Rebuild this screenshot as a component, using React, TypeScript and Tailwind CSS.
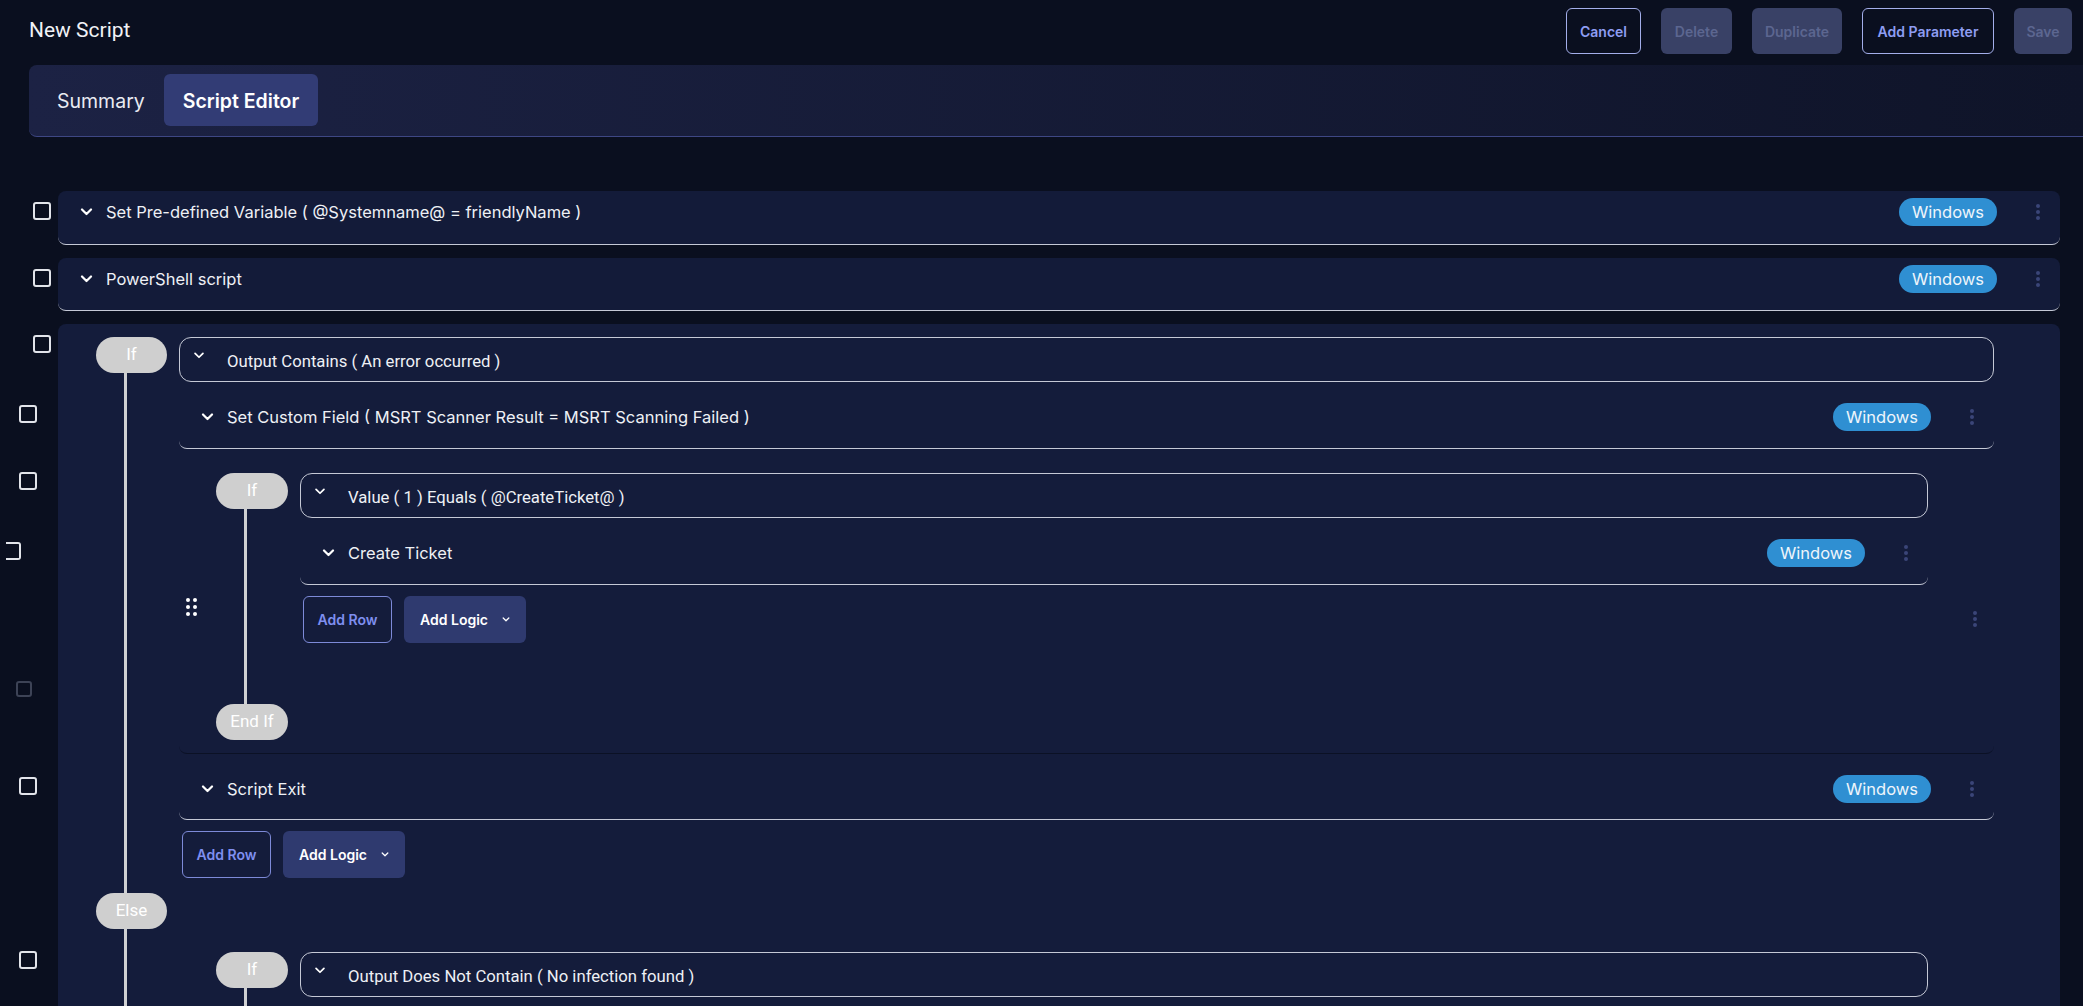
import React from "react";

const Chevron = ({ className = "", sw = "2" }: { className?: string; sw?: string }) => (
  <svg viewBox="0 0 12 8" className={className} fill="none" stroke="currentColor" strokeWidth={sw} strokeLinecap="round" strokeLinejoin="round">
    <path d="M1.5 1.5 6 6l4.5-4.5" />
  </svg>
);

const Kebab = ({ className = "" }: { className?: string }) => (
  <div className={`flex flex-col gap-[2px] ${className}`}>
    <span className="h-[4px] w-[4px] rounded-full bg-[#3a4578]" />
    <span className="h-[4px] w-[4px] rounded-full bg-[#3a4578]" />
    <span className="h-[4px] w-[4px] rounded-full bg-[#3a4578]" />
  </div>
);

const DragHandle = ({ className = "" }: { className?: string }) => (
  <div className={`grid grid-cols-2 gap-x-[3px] gap-y-[3px] ${className}`}>
    {[0, 1, 2, 3, 4, 5].map((i) => (
      <span key={i} className="h-[4px] w-[4px] rounded-full bg-white" />
    ))}
  </div>
);

const Checkbox = ({ className = "" }: { className?: string }) => (
  <div className={`absolute h-[18px] w-[18px] rounded-[3px] border-2 border-[#e2e4ea] ${className}`} />
);

const Badge = () => (
  <span className="flex h-[28px] items-center rounded-full bg-[#2f8fd2] px-[13px] font-['Inter',sans-serif] text-[16.5px] text-[#eef5fb]">
    Windows
  </span>
);

const Pill = ({ label, wide = false }: { label: string; wide?: boolean }) => (
  <div
    className={`flex h-[36px] shrink-0 items-center justify-center rounded-full bg-[#cfcfcf] text-[17px] text-white ${
      wide ? "w-[72px]" : "w-[71px]"
    }`}
  >
    {label}
  </div>
);

function StepRow({
  label,
  box = false,
  cbClass,
  pt = "",
  pb = "pb-[10px]",
}: {
  label: string;
  box?: boolean;
  cbClass?: string;
  pt?: string;
  pb?: string;
}) {
  return (
    <div className={`relative rounded-lg border-b border-[#c5c9d6] ${box ? "bg-[#131b39]" : ""} ${pt} ${pb}`}>
      {cbClass && <Checkbox className={cbClass} />}
      <div className="flex h-[42px] items-center pl-[22px] pr-[20px]">
        <Chevron className="h-[8px] w-[13px] shrink-0 text-white" sw="2.2" />
        <span className="ml-[13px] font-['Inter',sans-serif] text-[16.5px] text-[#eef0f5]">{label}</span>
        <span className="ml-auto">
          <Badge />
        </span>
        <Kebab className="ml-[39px]" />
      </div>
    </div>
  );
}

const Condition = ({ label }: { label: string }) => (
  <div className="flex h-[45px] rounded-xl border border-[#c5c9d6] pl-[13px]">
    <Chevron className="mt-[14px] h-[7px] w-[12px] shrink-0 text-white" />
    <span className="ml-[22px] mt-[12px] text-[16.7px] leading-[24px] text-[#eef0f5]">{label}</span>
  </div>
);

const ActionButtons = () => (
  <div className="ml-[3px] flex gap-[12px] font-['Inter',sans-serif] text-[14px] font-semibold">
    <button className="h-[47px] w-[89px] rounded-md border border-[#7d8ad8] text-[#7f8ff0]">Add Row</button>
    <button className="flex h-[47px] w-[122px] items-center justify-center gap-[14px] rounded-md bg-[#2f3a6f] text-white">
      Add Logic
      <Chevron className="h-[5px] w-[8px] text-white" />
    </button>
  </div>
);

function NestedIf({
  label,
  children,
  cbTop,
  extras,
  tall = true,
}: {
  label: string;
  children?: React.ReactNode;
  cbTop: string;
  extras?: React.ReactNode;
  tall?: boolean;
}) {
  return (
    <div className="relative rounded-b-lg border-b border-[#0b1125] pb-[13px] pl-[37px] pt-[24px]">
      <Checkbox className={`left-[-160px] ${cbTop}`} />
      {extras}
      <div className="flex gap-[12px]">
        <div className="flex w-[72px] shrink-0 flex-col">
          <Pill label="If" wide />
          <div className={`ml-[28px] w-[3px] bg-[#cfd0d2] ${tall ? "h-[195px]" : "h-[200px]"}`} />
          {tall && <Pill label="End If" wide />}
        </div>
        <div className="mr-[66px] flex-1">
          <Condition label={label} />
          {children}
        </div>
      </div>
    </div>
  );
}

export default function App() {
  return (
    <div className="h-screen w-full overflow-hidden bg-[#0a0f1f] font-['Roboto',sans-serif] text-white">
      <header className="flex items-center justify-between pl-[29px] pr-[11px] pt-[8px]">
        <h1 className="text-[21px] text-[#f1f2f6]">New Script</h1>
        <div className="flex items-center gap-[20px] font-['Inter',sans-serif] text-[14px] font-semibold">
          <button className="h-[46px] w-[75px] rounded-md border border-[#a3aeea] text-[#8e9df2]">Cancel</button>
          <button className="h-[46px] w-[71px] rounded-md bg-[#394166] text-[#5c6690]">Delete</button>
          <button className="h-[46px] w-[90px] rounded-md bg-[#394166] text-[#5c6690]">Duplicate</button>
          <button className="h-[46px] w-[132px] rounded-md border border-[#a3aeea] text-[#8e9df2]">Add Parameter</button>
          <button className="h-[46px] w-[58px] rounded-md bg-[#394166] text-[#5c6690]">Save</button>
        </div>
      </header>

      <div className="ml-[29px] mt-[11px] flex h-[72px] rounded-l-lg border-b border-[#3e4784] bg-linear-to-r from-[#1c2244] to-[#0f1429] pl-[9px] pt-[9px] font-['Inter',sans-serif] text-[19.5px]">
        <div className="flex h-[52px] items-center px-[19px] pt-[3px] text-[#e9ebf2]">Summary</div>
        <div className="flex h-[52px] items-center rounded-md bg-[#323c75] px-[19px] pt-[3px] font-semibold text-white">
          Script Editor
        </div>
      </div>

      <div className="ml-[58px] mr-[23px] mt-[54px] flex flex-col gap-[13px]">
        <StepRow label="Set Pre-defined Variable ( @Systemname@ = friendlyName )" box cbClass="left-[-25px] top-[11px]" pb="pb-[11px]" />
        <StepRow label="PowerShell script" box cbClass="left-[-25px] top-[11px]" pb="pb-[10px]" />

        <div className="relative rounded-lg bg-[#141c3b] pl-[38px] pt-[13px]">
          <Checkbox className="left-[-25px] top-[11px]" />
          <div className="flex gap-[12px]">
            <div className="flex w-[71px] shrink-0 flex-col">
              <Pill label="If" />
              <div className="ml-[28px] w-[3px] flex-1 bg-[#cfd0d2]" />
            </div>
            <div className="mr-[66px] flex-1 pb-[15px]">
              <Condition label="Output Contains ( An error occurred )" />
              <div className="mt-[14px]">
                <StepRow label="Set Custom Field ( MSRT Scanner Result = MSRT Scanning Failed )" cbClass="left-[-160px] top-[9px]" />
              </div>
              <NestedIf
                label="Value ( 1 ) Equals ( @CreateTicket@ )"
                cbTop="top-[23px]"
                extras={
                  <>
                    <div className="absolute left-[-173px] top-[93px] h-[18px] w-[15px] rounded-r-[3px] border-2 border-l-0 border-[#e2e4ea]" />
                    <div className="absolute left-[-163px] top-[232px] h-[16px] w-[16px] rounded-[3px] border-2 border-[#3d4356]" />
                    <DragHandle className="absolute left-[7px] top-[149px]" />
                    <Kebab className="absolute right-[17px] top-[162px]" />
                  </>
                }
              >
                <div className="mt-[14px]">
                  <StepRow label="Create Ticket" />
                </div>
                <div className="mt-[11px]">
                  <ActionButtons />
                </div>
              </NestedIf>
              <StepRow label="Script Exit" cbClass="left-[-160px] top-[23px]" pt="pt-[14px]" pb="pb-[9px]" />
              <div className="mt-[11px]">
                <ActionButtons />
              </div>
            </div>
          </div>

          <div className="flex gap-[12px]">
            <div className="flex w-[71px] shrink-0 flex-col">
              <Pill label="Else" />
              <div className="ml-[28px] w-[3px] flex-1 bg-[#cfd0d2]" />
            </div>
            <div className="mr-[66px] mt-[35px] flex-1">
              <NestedIf label="Output Does Not Contain ( No infection found )" cbTop="top-[23px]" tall={false} />
            </div>
          </div>
        </div>
      </div>
    </div>
  );
}
